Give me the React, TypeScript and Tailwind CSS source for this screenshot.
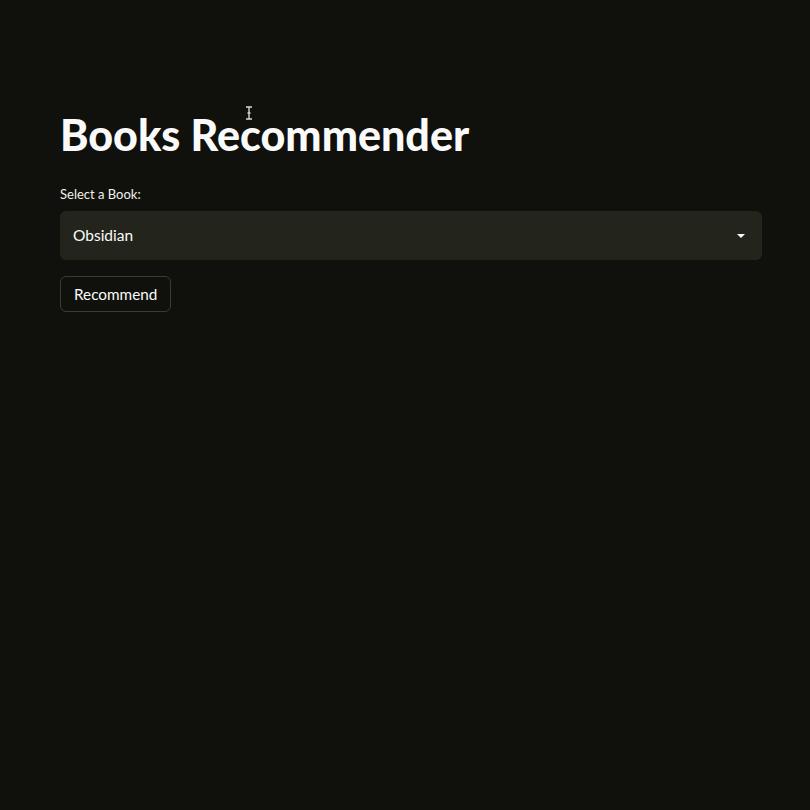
import React from "react";

export default function App() {
  return (
    <div
      className="relative w-[810px] h-[810px] bg-[#10110c] text-[#fafafa] overflow-hidden"
      style={{ fontFamily: '"Lato", "Open Sans", sans-serif' }}
    >
      <div className="pl-[60px] pr-[48px] pt-[106px] flex flex-col">
        <h1 className="text-[43px] leading-[58px] font-black tracking-[0px]">Books Recommender</h1>
        <div className="mt-[20px] text-[13px] leading-[20px] text-[#f0f0ea]">Select a Book:</div>
        <div className="mt-[7px] h-[49px] w-[702px] rounded-[6px] bg-[#23251c] flex items-center justify-between pl-[13px] pr-[16px]">
          <span className="text-[15.5px]">Obsidian</span>
          <svg width="10" height="6" viewBox="0 0 10 6">
            <path d="M1 1 L9 1 L5 5 Z" fill="#fafafa" />
          </svg>
        </div>
        <div className="mt-[16px]">
          <button className="h-[36px] px-[13px] rounded-[6px] border border-[#3a3c33] bg-[#10110c] text-[15.3px] text-[#fafafa]">
            Recommend
          </button>
        </div>
      </div>
      <svg className="absolute left-[245px] top-[106px]" width="8" height="14" viewBox="0 0 8 14">
        <path d="M1 1 H7 M4 1 V13 M1 13 H7 M2.5 7 H5.5" stroke="#d8d8c8" strokeWidth="1.4" fill="none" />
      </svg>
    </div>
  );
}
